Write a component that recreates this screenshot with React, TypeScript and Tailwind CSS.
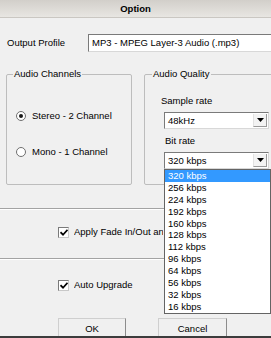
import React from "react";

const bitRates = ["320 kbps", "256 kbps", "224 kbps", "192 kbps", "160 kbps", "128 kbps", "112 kbps", "96 kbps", "64 kbps", "56 kbps", "32 kbps", "16 kbps"];

function DropButton() {
  return (
    <div className="ml-auto mr-[1px] w-[14px] h-full flex items-center justify-center bg-[#f3f3f3] border-l border-[#e2e2e2] border-r border-b border-r-[#9a9a9a] border-b-[#9a9a9a]">
      <svg width="7" height="4" viewBox="0 0 7 4">
        <path d="M0 0 H7 L3.5 4 Z" fill="#000" />
      </svg>
    </div>
  );
}

function Combo({ value, className }: { value: string; className?: string }) {
  return (
    <div className={"flex items-center bg-white border border-t-[#7a7a7a] border-l-[#7a7a7a] border-r-[#d8d8d8] border-b-[#d8d8d8] " + (className ?? "")}>
      <span className="pl-[3px]">{value}</span>
      <div className="ml-auto h-full py-[1px] flex">
        <DropButton />
      </div>
    </div>
  );
}

function Radio({ checked, label }: { checked?: boolean; label: string }) {
  return (
    <div className="flex items-center h-[12px] gap-[6px]">
      <div className="w-[10px] h-[10px] rounded-full border border-[#6f6f6f] bg-white flex items-center justify-center">
        {checked && <div className="w-[4px] h-[4px] rounded-full bg-[#1a1a1a]" />}
      </div>
      <span>{label}</span>
    </div>
  );
}

function Check({ label, maxW }: { label: string; maxW?: string }) {
  return (
    <div className="flex items-center h-[12px] pl-[58px] gap-[5px] whitespace-nowrap">
      <div className="w-[11px] h-[11px] flex-none border border-t-[#7a7a7a] border-l-[#7a7a7a] border-r-[#c8c8c8] border-b-[#c8c8c8] bg-white flex items-center justify-center">
        <svg width="8" height="7" viewBox="0 0 8 7">
          <path d="M0.5 3.2 L3 5.7 L7.5 0.8" stroke="#000" strokeWidth="1.7" fill="none" />
        </svg>
      </div>
      <span className={"overflow-hidden " + (maxW ?? "")}>{label}</span>
    </div>
  );
}

function Separator() {
  return <div className="h-[2px] border-t border-[#a3a3a3] border-b border-b-white" />;
}

export default function App() {
  return (
    <div className="w-[271px] h-[338px] overflow-hidden bg-[#f0f0f0] flex flex-col text-[9.5px] leading-[12px] text-black font-['Liberation_Sans',Arial,sans-serif]">
      {/* Title bar */}
      <div className="h-[18px] flex-none flex items-center justify-center bg-linear-to-b from-[#d2cfca] to-[#e8e6e2] border-b border-[#cac7c2] font-bold">
        Option
      </div>

      {/* Output profile */}
      <div className="mt-[16px] h-[18px] flex items-center flex-none">
        <div className="w-[88px] pl-[7px] flex-none">Output Profile</div>
        <Combo value="MP3 - MPEG Layer-3 Audio (.mp3)" className="w-[200px] h-[18px] flex-none" />
      </div>

      {/* Groups */}
      <div className="mt-[16px] flex pl-[6px] gap-[12px] flex-none">
        <fieldset className="w-[126px] h-[117px] flex-none border border-[#bdbdbd] rounded-[2px] pl-[9px]">
          <legend className="ml-[-3px] px-[1px]">Audio Channels</legend>
          <div className="mt-[30px] flex flex-col gap-[24px]">
            <Radio checked label="Stereo - 2 Channel" />
            <Radio label="Mono - 1 Channel" />
          </div>
        </fieldset>
        <fieldset className="w-[132px] h-[117px] flex-none border border-[#bdbdbd] rounded-[2px] pl-[16px]">
          <legend className="ml-[-9px] px-[1px]">Audio Quality</legend>
          <div className="mt-[15px]">Sample rate</div>
          <Combo value="48kHz" className="mt-[5px] ml-[3px] w-[105px] h-[17px]" />
          <div className="mt-[6px] ml-[4px]">Bit rate</div>
          <div className="relative z-10 mt-[5px] ml-[3px] w-[105px]">
            <Combo value="320 kbps" className="w-[105px] h-[17px]" />
            <div className="absolute left-0 top-full w-[107px] bg-white border border-[#646464]">
              {bitRates.map((r, i) => (
                <div key={r} className={"h-[11.9px] leading-[12px] pl-[3px] " + (i === 0 ? "bg-[#3399ff] text-white" : "")}>
                  {r}
                </div>
              ))}
            </div>
          </div>
        </fieldset>
      </div>

      <div className="mt-[23px] flex-none">
        <Separator />
      </div>
      <div className="mt-[16px] flex-none">
        <Check label="Apply Fade In/Out and Normalize" maxW="max-w-[89px]" />
      </div>
      <div className="mt-[20px] flex-none">
        <Separator />
      </div>
      <div className="mt-[19px] flex-none">
        <Check label="Auto Upgrade" />
      </div>

      {/* Buttons */}
      <div className="mt-[27px] h-[18px] flex pl-[58px] gap-[32px] flex-none">
        <button className="w-[68px] h-[20px] flex-none bg-[#f0f0f0] border border-t-[#cfcfcf] border-l-[#cfcfcf] border-r-[#8c8c8c] border-b-[#8c8c8c] text-center pt-[1px]">
          OK
        </button>
        <button className="w-[69px] h-[20px] flex-none bg-[#f0f0f0] border border-t-[#cfcfcf] border-l-[#cfcfcf] border-r-[#8c8c8c] border-b-[#8c8c8c] text-center pt-[1px]">
          Cancel
        </button>
      </div>
      <div className="h-[2px] bg-[#3c3c3c] flex-none relative z-20" />
    </div>
  );
}
